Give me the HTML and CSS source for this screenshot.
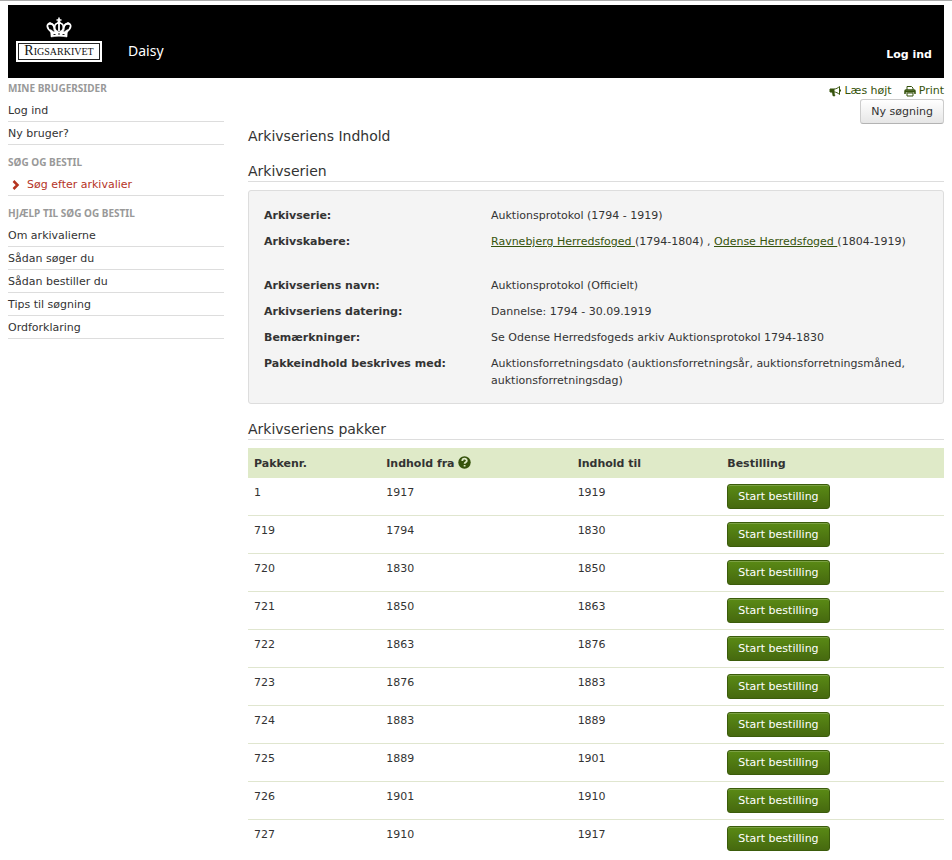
FILE: index.html
```html
<!DOCTYPE html>
<html lang="da">
<head>
    <meta charset="UTF-8">
    <meta name="viewport" content="width=device-width, initial-scale=1.0">
    <title>Daisy - Arkivseriens Indhold</title>
    <link rel="stylesheet" href="styles.css">
</head>
<body>
    <header class="header">
        <a class="logo" href="#" aria-label="Rigsarkivet">
            <svg class="crown" viewBox="0 0 26 22" width="26" height="22" fill="none" stroke="#fff">
                <path d="M13 .5v5M10.500 3h5" stroke-width="1.600"/>
                <path d="M5.500 15C0 11 .5 6.500 4 6.500c3 0 4.500 3 4.500 7M20.500 15C26 11 25.500 6.500 22 6.500c-3 0-4.500 3-4.500 7" stroke-width="1.800"/>
                <path d="M9.500 14C7.500 9 9 6 13 6s5.500 3 3.500 8" stroke-width="1.600"/>
                <path d="M13 6v8" stroke-width="1.800"/>
                <path d="M4.500 12.500L8 15l1.500-2.500L13 15l3.500-2.500L18 15l3.500-2.500-.5 7.500c-5-1-11-1-16 0z" fill="#fff" stroke-width=".5"/>
                <path d="M7.500 17.500h2M12 17h2M16.500 17.500h2" stroke="#222" stroke-width="1"/>
                <circle cx="4" cy="6.500" r="1.200" fill="#fff" stroke="none"/>
                <circle cx="22" cy="6.500" r="1.200" fill="#fff" stroke="none"/>
                <circle cx="13" cy="5.500" r="1.700" fill="#fff" stroke="none"/>
            </svg>
            <span class="logo-text">Rigsarkivet</span>
        </a>
        <span class="site-name">Daisy</span>
        <a class="login" href="#">Log ind</a>
    </header>

    <div class="page">
        <nav class="sidebar">
            <h4>Mine brugersider</h4>
            <ul>
                <li><a href="#">Log ind</a></li>
                <li><a href="#">Ny bruger?</a></li>
            </ul>
            <h4>Søg og bestil</h4>
            <ul>
                <li class="active">
                    <a href="#">
                        <svg width="8" height="10" viewBox="0 0 8 10" fill="none" stroke="#b5341f" stroke-width="2.500"><path d="M1.500 1l4 4-4 4"/></svg>
                        Søg efter arkivalier
                    </a>
                </li>
            </ul>
            <h4>Hjælp til søg og bestil</h4>
            <ul>
                <li><a href="#">Om arkivalierne</a></li>
                <li><a href="#">Sådan søger du</a></li>
                <li><a href="#">Sådan bestiller du</a></li>
                <li><a href="#">Tips til søgning</a></li>
                <li><a href="#">Ordforklaring</a></li>
            </ul>
        </nav>

        <main class="content">
            <div class="tools">
                <a href="#">
                    <svg width="12" height="12" viewBox="0 0 12 12" fill="none" stroke="#36530c"><path d="M1 4h4v3H1z" fill="#36530c"/><path d="M5 4c2 0 4-1 5.500-2.500v8C9 8 7 7 5 7"/><path d="M3 7l1 4h2L5 7" fill="#36530c" stroke-width=".5"/><path d="M11.500 4.500v2"/></svg>
                    Læs højt
                </a>
                <a href="#">
                    <svg width="12" height="12" viewBox="0 0 12 12" fill="none" stroke="#36530c"><path d="M3 5V1.500h4.500L9 3v2"/><path d="M1 9V6c0-.6.4-1 1-1h8c.6 0 1 .4 1 1v3" stroke-width="1.500"/><path d="M1 6.500h10" stroke-width="2"/><path d="M3 8h6v3H3z" fill="#fff"/></svg>
                    Print
                </a>
            </div>
            <div class="search-row">
                <button class="button" type="button">Ny søgning</button>
            </div>

            <h1>Arkivseriens Indhold</h1>

            <h2>Arkivserien</h2>
            <dl class="well">
                <dt>Arkivserie:</dt>
                <dd>Auktionsprotokol (1794 - 1919)</dd>
                <dt>Arkivskabere:</dt>
                <dd class="creators"><a href="#">Ravnebjerg Herredsfoged </a>(1794-1804) , <a href="#">Odense Herredsfoged </a>(1804-1919)</dd>
                <dt>Arkivseriens navn:</dt>
                <dd>Auktionsprotokol (Officielt)</dd>
                <dt>Arkivseriens datering:</dt>
                <dd>Dannelse: 1794 - 30.09.1919</dd>
                <dt>Bemærkninger:</dt>
                <dd>Se Odense Herredsfogeds arkiv Auktionsprotokol 1794-1830</dd>
                <dt>Pakkeindhold beskrives med:</dt>
                <dd>Auktionsforretningsdato (auktionsforretningsår, auktionsforretningsmåned, auktionsforretningsdag)</dd>
            </dl>

            <h2>Arkivseriens pakker</h2>
            <table class="packages">
                <thead>
                    <tr>
                        <th class="col-nr">Pakkenr.</th>
                        <th class="col-from">Indhold fra <a class="help" href="#" aria-label="Hjælp"><svg width="13" height="13" viewBox="0 0 13 13"><circle cx="6.500" cy="6.500" r="6.200" fill="#36530c"/><path d="M4.300 5C4.300 2 8.800 2 8.800 4.800c0 1.600-2.200 1.500-2.200 3M6.600 9v1.600" fill="none" stroke="#dfeac8" stroke-width="1.800"/></svg></a></th>
                        <th class="col-to">Indhold til</th>
                        <th>Bestilling</th>
                    </tr>
                </thead>
                <tbody>
                    <tr><td>1</td><td>1917</td><td>1919</td><td><button class="button button-green" type="button">Start bestilling</button></td></tr>
                    <tr><td>719</td><td>1794</td><td>1830</td><td><button class="button button-green" type="button">Start bestilling</button></td></tr>
                    <tr><td>720</td><td>1830</td><td>1850</td><td><button class="button button-green" type="button">Start bestilling</button></td></tr>
                    <tr><td>721</td><td>1850</td><td>1863</td><td><button class="button button-green" type="button">Start bestilling</button></td></tr>
                    <tr><td>722</td><td>1863</td><td>1876</td><td><button class="button button-green" type="button">Start bestilling</button></td></tr>
                    <tr><td>723</td><td>1876</td><td>1883</td><td><button class="button button-green" type="button">Start bestilling</button></td></tr>
                    <tr><td>724</td><td>1883</td><td>1889</td><td><button class="button button-green" type="button">Start bestilling</button></td></tr>
                    <tr><td>725</td><td>1889</td><td>1901</td><td><button class="button button-green" type="button">Start bestilling</button></td></tr>
                    <tr><td>726</td><td>1901</td><td>1910</td><td><button class="button button-green" type="button">Start bestilling</button></td></tr>
                    <tr><td>727</td><td>1910</td><td>1917</td><td><button class="button button-green" type="button">Start bestilling</button></td></tr>
                </tbody>
            </table>
        </main>
    </div>
</body>
</html>
```

FILE: styles.css
```css
* {
    box-sizing: border-box;
}
body {
    font-family: Verdana, "DejaVu Sans", sans-serif;
    font-size: 11px;
    line-height: 17px;
    color: #333;
    margin: 0;
    padding: 4px 8px 0;
    border-top: 1px solid #aaa;
    background-color: #fff;
}
h1, h2, h4, ul, dl, dd {
    margin: 0;
    padding: 0;
}
.header {
    display: flex;
    align-items: flex-end;
    background-color: #000;
    padding: 12px 12px 16px 8px;
}
.logo {
    display: flex;
    flex-direction: column;
    align-items: center;
    text-decoration: none;
}
.crown {
    display: block;
    margin-bottom: 2px;
}
.logo-text {
    width: 86px;
    height: 21px;
    border: 1px solid #fff;
    outline: 1px solid #222;
    outline-offset: -3px;
    background-color: #fff;
    color: #111;
    font-family: "Liberation Serif", serif;
    font-size: 14px;
    line-height: 18px;
    font-variant: small-caps;
    text-align: center;
}
.site-name {
    margin-left: 26px;
    color: #fff;
    font-family: "Noto Sans", sans-serif;
    font-size: 14px;
    line-height: 22px;
}
.login {
    margin-left: auto;
    color: #fff;
    font-weight: bold;
    line-height: 15px;
    text-decoration: none;
}
.page {
    display: flex;
    gap: 24px;
}
.sidebar {
    flex: 0 0 216px;
}
.sidebar h4 {
    color: #999;
    font-family: "Noto Sans", sans-serif;
    font-size: 10px;
    line-height: 20px;
    padding-bottom: 1px;
    text-transform: uppercase;
}
.sidebar ul {
    list-style: none;
    margin-bottom: 7px;
}
.sidebar li {
    border-bottom: 1px solid #ddd;
    padding-top: 2px;
    line-height: 20px;
}
.sidebar a {
    color: #333;
    text-decoration: none;
}
.sidebar .active a {
    display: flex;
    align-items: center;
    gap: 7px;
    padding-left: 4px;
    color: #b5341f;
}
.content {
    flex: 1;
    min-width: 0;
}
.tools {
    display: flex;
    justify-content: flex-end;
    gap: 12px;
    padding-top: 4px;
}
.tools a {
    display: flex;
    align-items: center;
    gap: 3px;
    color: #36530c;
    text-decoration: none;
}
.search-row {
    display: flex;
    justify-content: flex-end;
}
.button {
    display: block;
    height: 25px;
    padding: 0 10px;
    border: 1px solid #ccc;
    border-bottom-color: #b3b3b3;
    border-radius: 3px;
    background-image: linear-gradient(#fff, #e6e6e6);
    color: #333;
    font-family: inherit;
    font-size: 11px;
    cursor: pointer;
}
.button-green {
    border-color: #3b5c0b;
    background-image: linear-gradient(#5a8a15, #46690f);
    box-shadow: inset 0 1px 0 rgba(255, 255, 255, 0.2);
    color: #fff;
}
h1, h2 {
    font-size: 14px;
    font-weight: normal;
}
h1 {
    line-height: 20px;
    margin: 2px 0 16px;
}
h2 {
    line-height: 19px;
    border-bottom: 1px solid #ddd;
    margin-bottom: 8px;
}
.well {
    display: grid;
    grid-template-columns: 227px 1fr;
    row-gap: 9px;
    padding: 16px 16px 14px 15px;
    margin-bottom: 16px;
    border: 1px solid #ddd;
    border-radius: 3px;
    background-color: #f4f4f4;
}
.well dt {
    font-weight: bold;
}
.well a {
    color: #36530c;
}
.creators {
    padding-bottom: 18px;
}
.packages {
    width: 100%;
    table-layout: fixed;
    border-spacing: 0;
}
.packages th {
    padding: 6px;
    height: 30px;
    background-color: #dfeac8;
    text-align: left;
}
.packages td {
    padding: 6px;
    height: 38px;
    border-bottom: 1px solid #e0e6cf;
    vertical-align: top;
}
.packages tr:last-child td {
    border-bottom: none;
}
.col-nr {
    width: 19%;
}
.col-from {
    width: 27.5%;
}
.col-to {
    width: 21.5%;
}
.help svg {
    vertical-align: -2px;
}
```
